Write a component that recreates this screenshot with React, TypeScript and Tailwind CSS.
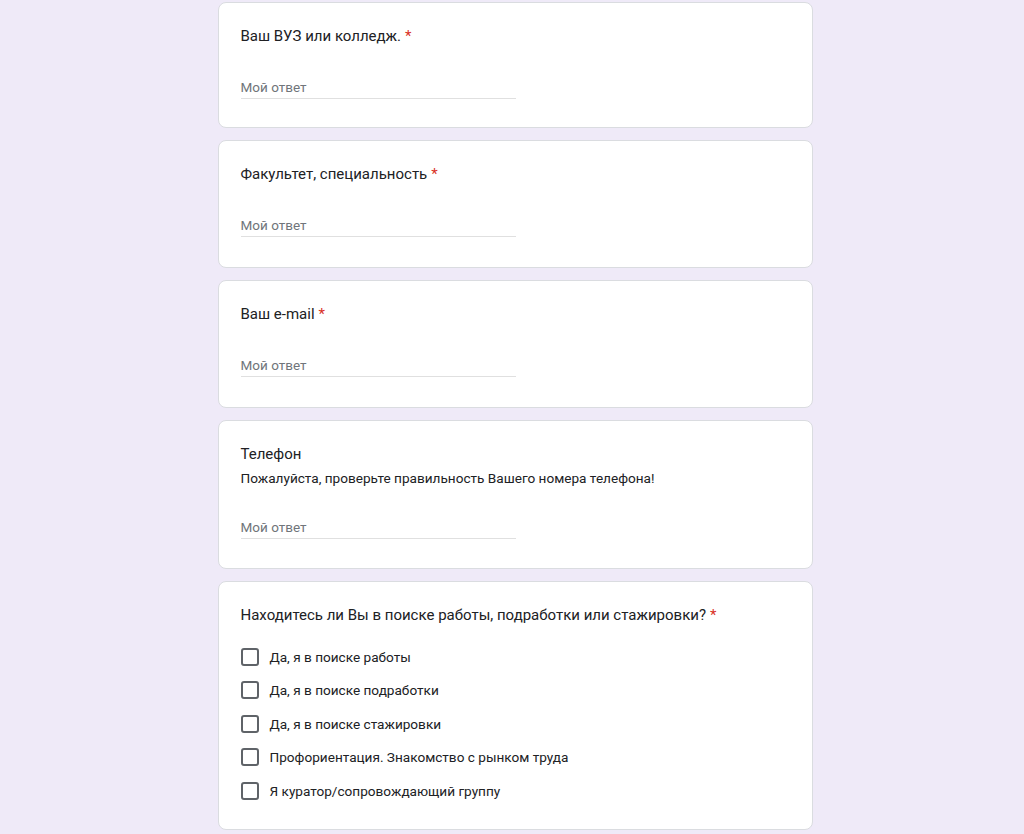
import React from "react";

function Star() {
  return <span className="text-[#d93025] ml-[4px]">*</span>;
}

function TextCard({ title, required, desc, first }: { title: string; required?: boolean; desc?: string; first?: boolean }) {
  return (
    <div
      className={`bg-white border border-[#dadce0] rounded-[8px] px-[22px] pt-[22px] ${
        first ? "pb-[28px]" : desc ? "pb-[29px]" : "pb-[30px]"
      }`}
    >
      <div className="text-[15px] leading-[22px] text-[#202124]">
        {title}
        {required && <Star />}
      </div>
      {desc && <div className="text-[13.6px] leading-[20px] text-[#202124] mt-[3px]">{desc}</div>}
      <div className={`${desc ? "mt-[29px]" : "mt-[30px]"} w-[275px] border-b border-[#e0e0e0] pb-[1px]`}>
        <div className="text-[13.5px] leading-[20px] text-[#70757a]">Мой ответ</div>
      </div>
    </div>
  );
}

const options = [
  "Да, я в поиске работы",
  "Да, я в поиске подработки",
  "Да, я в поиске стажировки",
  "Профориентация. Знакомство с рынком труда",
  "Я куратор/сопровождающий группу",
];

export default function App() {
  return (
    <div className="min-h-[834px] bg-[#efeaf8] font-['Roboto',sans-serif] flex justify-center pl-[6px] pt-[2px]">
      <div className="w-[595px] flex flex-col gap-[12px]">
        <TextCard title="Ваш ВУЗ или колледж." required first />
        <TextCard title="Факультет, специальность" required />
        <TextCard title="Ваш e-mail" required />
        <TextCard title="Телефон" desc="Пожалуйста, проверьте правильность Вашего номера телефона!" />
        <div className="bg-white border border-[#dadce0] rounded-[8px] px-[22px] pt-[22px] pb-[29px]">
          <div className="text-[15px] leading-[22px] text-[#202124]">
            Находитесь ли Вы в поиске работы, подработки или стажировки?
            <Star />
          </div>
          <div className="mt-[22px] flex flex-col gap-[15.4px]">
            {options.map((o) => (
              <div key={o} className="flex items-center h-[18px]">
                <div className="w-[18px] h-[18px] border-2 border-[#5f6368] rounded-[3px] shrink-0" />
                <span className="ml-[11px] text-[13.6px] leading-[18px] text-[#202124]">{o}</span>
              </div>
            ))}
          </div>
        </div>
      </div>
    </div>
  );
}
